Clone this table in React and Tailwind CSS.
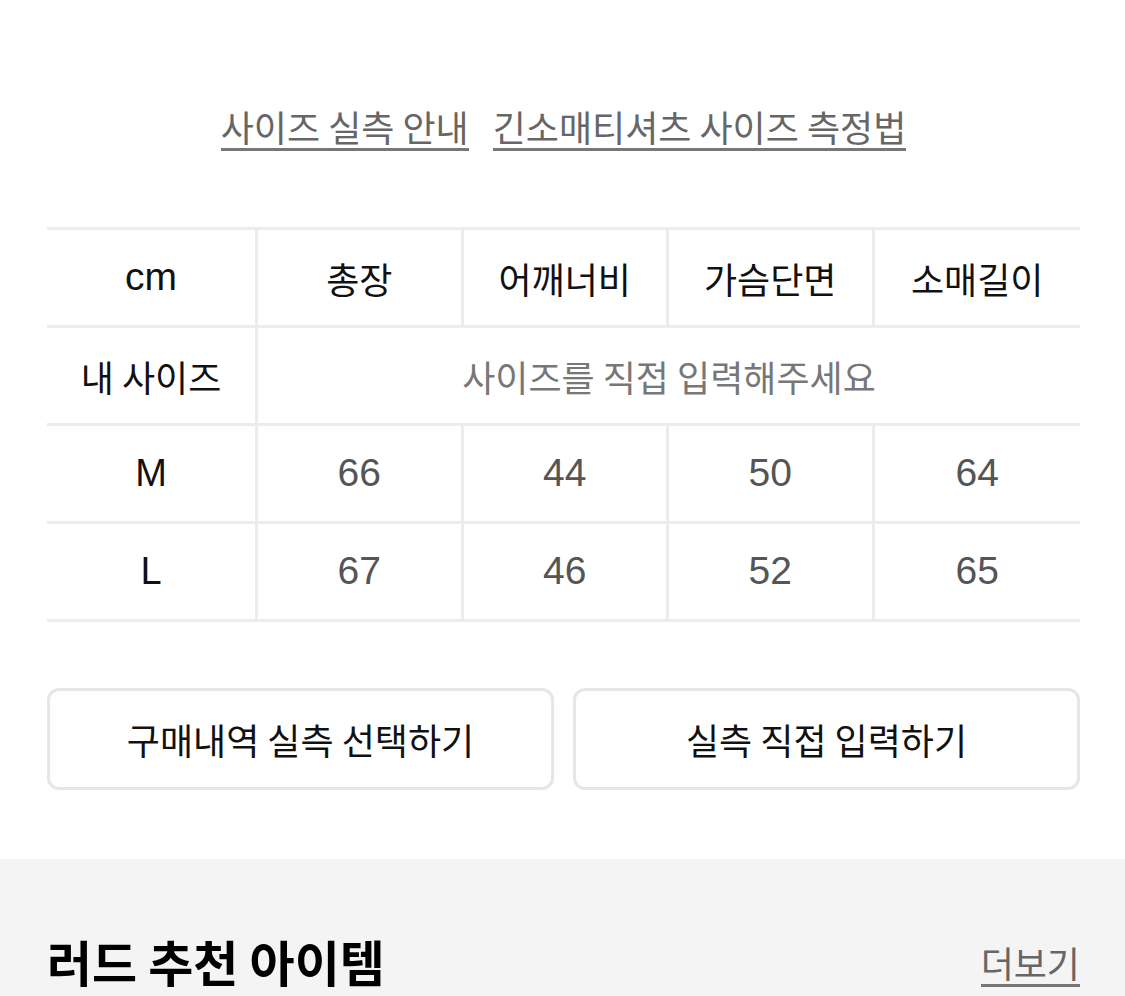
import React from "react";

const KR = { fontFamily: '"Noto Sans CJK KR", "Noto Sans", sans-serif' };
const LAT = { fontFamily: '"Liberation Sans", Roboto, "Noto Sans CJK KR", sans-serif' };

const cols = ["총장", "어깨너비", "가슴단면", "소매길이"];
const rows = [
  ["M", ["66", "44", "50", "64"]],
  ["L", ["67", "46", "52", "65"]],
];

function Cell({ children, last, className = "", style }) {
  return (
    <div
      className={`h-[98px] flex items-center justify-center border-b-[3px] border-[#ececec] ${last ? "" : "border-r-[3px]"} ${className}`}
      style={style}
    >
      {children}
    </div>
  );
}

export default function App() {
  return (
    <div className="w-[1125px] h-[996px] bg-white overflow-hidden" style={KR}>
      <div className="pl-[47px] pr-[45px]">
        <div className="pt-[104px] h-[156px] flex justify-center items-start gap-[24px] text-[36px] text-[#666]">
          <span className="inline-block leading-[44px] border-b-[3px] border-[#777]">사이즈 실측 안내</span>
          <span className="inline-block leading-[44px] border-b-[3px] border-[#777]">긴소매티셔츠 사이즈 측정법</span>
        </div>

        <div className="mt-[71px] border-t-[3px] border-[#ececec] grid grid-cols-[211px_1fr_1fr_1fr_1fr]">
          <Cell className="text-[39px] text-[#111]" style={LAT}>cm</Cell>
          {cols.map((c, i) => (
            <Cell key={c} last={i === 3} className="text-[36px] text-[#111]">{c}</Cell>
          ))}
          <Cell className="text-[36px] text-[#111]">내 사이즈</Cell>
          <Cell last className="col-span-4 text-[36px] text-[#777]">사이즈를 직접 입력해주세요</Cell>
          {rows.map(([s, vals]) => (
            <React.Fragment key={s}>
              <Cell className="text-[38px] text-[#111]" style={LAT}>{s}</Cell>
              {vals.map((v, i) => (
                <Cell key={i} last={i === 3} className="text-[39px] text-[#555]" style={LAT}>{v}</Cell>
              ))}
            </React.Fragment>
          ))}
        </div>

        <div className="mt-[66px] grid grid-cols-2 gap-[19px] pb-[69px]">
          <button className="h-[102px] rounded-[12px] border-[3px] border-[#e6e6e6] bg-white text-[36px] text-[#111] flex items-center justify-center" style={KR}>
            구매내역 실측 선택하기
          </button>
          <button className="h-[102px] rounded-[12px] border-[3px] border-[#e6e6e6] bg-white text-[36px] text-[#111] flex items-center justify-center" style={KR}>
            실측 직접 입력하기
          </button>
        </div>
      </div>

      <div className="bg-[#f4f4f4] h-[200px] pl-[47px] pr-[45px] pt-[70px]">
        <div className="flex justify-between items-end">
          <h2 className="text-[49px] font-bold text-black leading-[64px]">러드 추천 아이템</h2>
          <span className="text-[36px] text-[#666] leading-[44px] border-b-[3px] border-[#777] mb-[6px]">더보기</span>
        </div>
      </div>
    </div>
  );
}
